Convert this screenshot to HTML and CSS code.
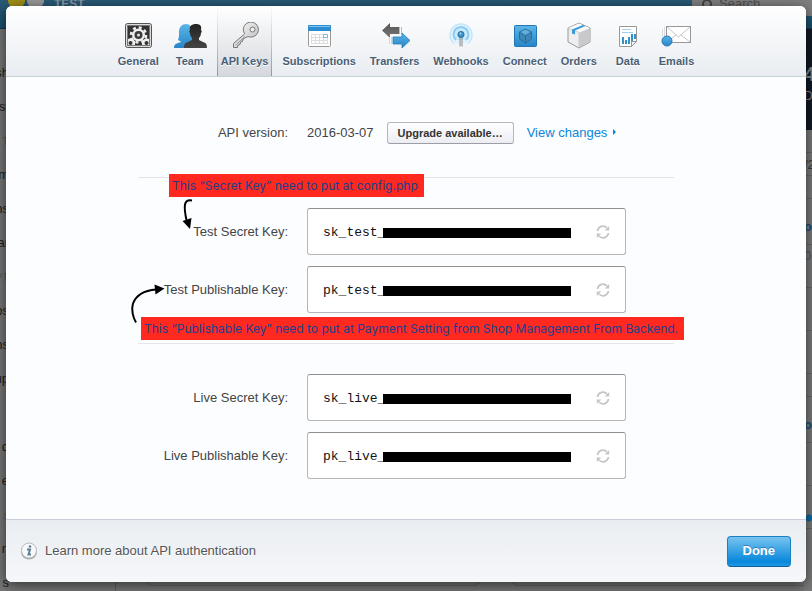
FILE: index.html
```html
<!DOCTYPE html>
<html lang="en">
<head>
<meta charset="utf-8">
<title>Account settings</title>
<link rel="stylesheet" href="styles.css">
</head>
<body>
<svg class="defs" width="0" height="0" aria-hidden="true">
  <defs>
    <linearGradient id="blue" x1="0" y1="0" x2="0" y2="1"><stop offset="0" stop-color="#5bb5e8"/><stop offset="1" stop-color="#2785c8"/></linearGradient>
    <linearGradient id="grey" x1="0" y1="0" x2="0" y2="1"><stop offset="0" stop-color="#555"/><stop offset="1" stop-color="#777"/></linearGradient>
    <linearGradient id="silver" x1="0" y1="0" x2="1" y2="1"><stop offset="0" stop-color="#fff"/><stop offset="1" stop-color="#b4b4b8"/></linearGradient>
    <linearGradient id="dark" x1="0" y1="0" x2="0" y2="1"><stop offset="0" stop-color="#222"/><stop offset="1" stop-color="#444"/></linearGradient>
    <symbol id="refresh" viewBox="0 0 14 14">
      <path d="M1.500 6A5.500 5.500 0 0 1 11 3M12.500 8A5.500 5.500 0 0 1 3 11" fill="none" stroke="#c6c6c8" stroke-width="1.800"/>
      <path d="M13.200 1v4.500H8.700zM.8 13V8.500h4.500z" fill="#c6c6c8"/>
    </symbol>
  </defs>
</svg>

<div class="page" aria-hidden="true">
  <div class="topbar"><span class="coin"></span><span class="coin silver"></span><b>TEST</b><div class="search"><svg width="12" height="12" viewBox="0 0 12 12"><circle cx="5" cy="4" r="4" fill="none" stroke="#444" stroke-width="2"/></svg>Search</div></div>
  <div class="columns">
    <ul class="side">
      <li class="tall">sh</li><li>st</li><li class="head">T</li><li>m</li><li>ns</li><li>ar</li><li class="head">PT</li><li>os</li><li>ns</li><li>up</li><li></li><li>d</li><li>e</li><li class="head">s</li><li>n</li><li>s</li>
    </ul>
    <div class="cards"><i></i><i></i></div>
    <div class="edge">
      <div class="figure"><b>4</b><span>D</span></div>
      <p class="short"></p><p class="short">/2</p><p class="short"></p><p class="link">of</p><p class="note">0</p><p></p><p></p><p class="short"></p><p class="link">of</p><p></p><p class="dot"></p>
    </div>
  </div>
</div>

<main class="modal">
  <nav class="tabs">
    <button type="button"><svg width="40" height="28" viewBox="0 0 40 28">
      <rect x="7.500" y="1.500" width="26" height="24" rx="2" fill="#ddd" stroke="#555"/><rect x="9.500" y="3.500" width="22" height="20" fill="#333" stroke="#777"/>
      <circle cx="20.500" cy="13" r="6.500" fill="#eee"/><circle cx="20.500" cy="13" r="7.500" fill="none" stroke="#eee" stroke-width="2.600" stroke-dasharray="3 2.890"/><circle cx="20.500" cy="13" r="4" fill="#3a3a3a"/><circle cx="20.500" cy="13" r="1.600" fill="#ddd"/>
      <path d="M10 23v-6l3-1 4 3v4zM31 23v-6l-3-1-4 3v4z" fill="#eee"/><circle cx="12.500" cy="21" r="2" fill="#333"/><circle cx="28.500" cy="21" r="2" fill="#333"/></svg>General</button>
    <button type="button"><svg width="40" height="28" viewBox="0 0 40 28">
      <path d="M4 26c0-3 1-4 4-5l3-1c0-1-2-1-3-2 1-2 1-4 1-8 0-5 3-8 7-8s6 3 6 8v16z" fill="url(#blue)"/>
      <path d="M14 26c0-4 1-5 4-6l4-2v-2c-1-1-2-3-2-5-1-1-1-2 0-3-1-4 2-6 6-6s6 2 5 6c1 1 1 2 0 3 0 2-1 4-2 5v2l4 2c3 1 4 2 4 6z" fill="url(#dark)"/></svg>Team</button>
    <button type="button" class="active" aria-current="page"><svg width="40" height="28" viewBox="0 0 40 28">
      <path d="M19.500 12 8.500 21.500v4h4l.500-2.500 2-.500.500-2.500 2-.500.500-2.500 5-2.500a7.500 7.500 0 1 0-3.500-3z" fill="url(#silver)" stroke="#777"/><circle cx="27.500" cy="7.500" r="2.500" fill="#eee" stroke="#777"/><path d="M10.500 23 20 14.500" stroke="#999"/></svg>API Keys</button>
    <button type="button"><svg width="40" height="28" viewBox="0 0 40 28">
      <rect x="9.500" y="3.500" width="22" height="21" rx="1" fill="#fff" stroke="#999"/><path d="M9 9V4q0-1 1-1h21q1 0 1 1v5z" fill="#2b8dce"/><path d="M10 4.500h21" stroke="#7cc4ee"/>
      <path d="M12.500 12.500h16v9h-16zM12.500 15.500h16M12.500 18.500h16M16.500 12.500v9M20.500 12.500v9M24.500 12.500v9" fill="none" stroke="#ddd"/><path d="M24.500 12.500h4v3h-4z" fill="#fff" stroke="#75bce6"/></svg>Subscriptions</button>
    <button type="button"><svg width="40" height="28" viewBox="0 0 40 28">
      <path d="M7 8.500 15 1v4h9v7h-9v4z" fill="url(#grey)"/><path d="M24.500 5v7M26.500 5v7" stroke="#bbb"/>
      <path d="M35 18.500 27 11v4h-9v7h9v4z" fill="url(#blue)" stroke="#277fb8" stroke-width=".800"/><path d="M14.500 15v7M16.500 15v7" stroke="#b9def4"/></svg>Transfers</button>
    <button type="button"><svg width="40" height="28" viewBox="0 0 40 28">
      <path d="M13 21.500a11 11 0 1 1 14 0" fill="#e3f3fd" stroke="#c3e5fa" stroke-width="1.500"/><path d="M15 18a7.500 7.500 0 1 1 10 0" fill="#cbe9fb" stroke="#8acbf3" stroke-width="2"/><circle cx="20" cy="12.500" r="4" fill="#b6def6"/>
      <path d="M19 15.500v9M21 15.500v9" stroke="#888"/><circle cx="20" cy="12.500" r="3" fill="#4193c6" stroke="#2671a0"/><circle cx="19.500" cy="11.500" r="1" fill="#a4daf5"/></svg>Webhooks</button>
    <button type="button"><svg width="40" height="28" viewBox="0 0 40 28">
      <rect x="9.500" y="3.500" width="22" height="21" rx="1" fill="url(#blue)" stroke="#2475b4"/><path d="m20.500 7 6 3v7l-6 4-6-4v-7z" fill="#3c87b8" stroke="#276b9a"/><path d="m14.500 10 6 3.500 6-3.500M20.500 13.500V21" fill="none" stroke="#276b9a"/><path d="m20.500 7.500 5 2.500-5 3-5-3z" fill="#64aedb"/></svg>Connect</button>
    <button type="button"><svg width="40" height="28" viewBox="0 0 40 28">
      <path d="m20 1 11 5v14l-11 6-11-6V6z" fill="#eee" stroke="#999"/><path d="m20 10.500 10.500-4V20L20 25.500z" fill="#c9c9cd"/><path d="m20 1.500 10.500 4.500L20 10.500 9.500 6z" fill="#fafafa"/><path d="M9.500 6.500 20 10.500V25" fill="none" stroke="#ccc"/><path d="m13 7.500 11-4.500 2.500 1L16 8.500v4l-3-1z" fill="#3b9bd8"/></svg>Orders</button>
    <button type="button"><svg width="40" height="28" viewBox="0 0 40 28">
      <path d="M11.500 4.500h17v15l-5 5h-12z" fill="#fff" stroke="#999"/><path d="M14 7.500h9M14 10.500h11" stroke="#a5d0ec"/><path d="M15 22v-7M18 22v-4M21 22v-7M24 20v-8M27 17v-5" stroke="#348fca" stroke-width="2"/><path d="M23.500 24.500v-5h5z" fill="#eee" stroke="#999"/></svg>Data</button>
    <button type="button"><svg width="40" height="28" viewBox="0 0 40 28">
      <rect x="9.500" y="4.500" width="24" height="16" fill="#fff" stroke="#999"/><path d="m10 5 11.500 10L33 5M10 20l9-7M33 20l-9-7" fill="none" stroke="#c4c4c4"/><path d="M7.500 5v12M5.500 7v8" stroke="#ddd"/><circle cx="10" cy="19" r="5" fill="url(#blue)" stroke="#2879b5"/></svg>Emails</button>
  </nav>

  <form class="content">
    <div class="row version">
      <span class="label">API version:</span>
      <div class="value"><span>2016-03-07</span><button type="button" class="upgrade">Upgrade available…</button><a href="#changes">View changes <span class="caret"></span></a></div>
    </div>

    <section class="keys">
      <div class="row"><label class="label" for="ts">Test Secret Key:</label><div class="field"><input id="ts" readonly value="sk_test_"><span class="mask"></span><button type="button" aria-label="Roll key"><svg width="14" height="14"><use href="#refresh"/></svg></button></div></div>
      <div class="row"><label class="label" for="tp">Test Publishable Key:</label><div class="field"><input id="tp" readonly value="pk_test_"><span class="mask"></span><button type="button" aria-label="Roll key"><svg width="14" height="14"><use href="#refresh"/></svg></button></div></div>
      <span class="callout secret">This “Secret Key” need to put at config.php</span>
      <span class="callout publishable">This “Publishable Key” need to put at Payment Setting from Shop Management From Backend.</span>
      <svg class="arrow down" width="16" height="34" viewBox="180 197 16 34"><path d="M192 200.500q-6-1-7 4t2 18" fill="none" stroke="#000" stroke-width="2"/><path d="m182.500 221 9-3-1.500 11z"/></svg>
      <svg class="arrow up" width="40" height="44" viewBox="128 282 40 44"><path d="M136 322.500c-3-5-5-13-3-19 3-8 11-13 23-14" fill="none" stroke="#000" stroke-width="2"/><path d="m154.500 284.500 10 4-9 6z"/></svg>
    </section>

    <section class="keys">
      <div class="row"><label class="label" for="ls">Live Secret Key:</label><div class="field"><input id="ls" readonly value="sk_live_"><span class="mask"></span><button type="button" aria-label="Roll key"><svg width="14" height="14"><use href="#refresh"/></svg></button></div></div>
      <div class="row"><label class="label" for="lp">Live Publishable Key:</label><div class="field"><input id="lp" readonly value="pk_live_"><span class="mask"></span><button type="button" aria-label="Roll key"><svg width="14" height="14"><use href="#refresh"/></svg></button></div></div>
    </section>
  </form>

  <footer class="footer">
    <a href="#docs"><svg width="18" height="18" viewBox="0 0 18 18"><circle cx="9" cy="9.500" r="8" fill="#aaa"/><circle cx="9" cy="8.500" r="7.500" fill="#f7f9fa" stroke="#b5bbc0"/><path d="M7 7.500h3l-1.500 5H11" fill="none" stroke="#5d7f92" stroke-width="2"/><circle cx="10" cy="4.500" r="1.300" fill="#5d7f92"/></svg>Learn more about API authentication</a>
    <button type="button" class="done">Done</button>
  </footer>
</main>
</body>
</html>
```

FILE: styles.css
```css
* { box-sizing: border-box; }

body {
  margin: 0;
  min-height: 100vh;
  position: relative;
  overflow: hidden;
  background: #777;
  font: 13px/16px "Liberation Sans", Arial, sans-serif;
  color: #444;
}

button, input { font: inherit; color: inherit; margin: 0; }
a { text-decoration: none; }
.defs { position: absolute; }

/* Dimmed dashboard behind the dialog */
.page {
  position: absolute;
  inset: 0;
  overflow: hidden;
  display: flex;
  flex-direction: column;
}

.topbar {
  display: flex;
  align-items: flex-start;
  flex: none;
  height: 29px;
  padding-left: 8px;
  gap: 2px;
  background: linear-gradient(#2b5a77, #18506f);
  border-bottom: 1px solid #123b53;
  color: #8d9ba5;
  font-size: 12px;
  line-height: 8px;
}
.topbar b { margin-left: 8px; }
.coin { width: 17px; height: 7px; background: #a09018; border-radius: 0 0 6px 6px; }
.coin.silver { background: #999; }
.search {
  display: flex;
  gap: 5px;
  width: 120px;
  height: 16px;
  margin-left: auto;
  padding-left: 10px;
  background: #808080;
  color: #505050;
  font-size: 13px;
  line-height: 8px;
}

.columns { display: flex; flex: 1; min-height: 0; }
.side {
  display: flex;
  flex-direction: column;
  align-items: flex-end;
  flex: none;
  width: 9px;
  margin: 0 106px 0 0;
  padding: 0;
  list-style: none;
  line-height: 34px;
  color: #222;
}
.side li { flex: none; height: 34px; }
.side .tall { height: 61px; line-height: 88px; }
.side .head { color: #555b60; font-size: 11px; }

.cards {
  display: flex;
  flex: 1;
  gap: 32px;
  padding: 0 0 5px 31px;
  border-left: 1px solid #606060;
}
.cards i { flex: 10; border: 1px solid #666; border-radius: 5px; }
.cards i:last-child { flex: 9; margin-right: -8px; }

.edge { flex: none; width: 8px; overflow: hidden; background: #7b7b7b; }
.figure { height: 101px; padding-top: 34px; background: #121a25; color: #888; overflow: hidden; }
.figure b { display: block; font-size: 20px; line-height: 22px; }
.figure span { font-size: 12px; line-height: 22px; }
.edge p { height: 43px; margin: 0; border-bottom: 1px solid #686868; color: #3a3a3a; }
.edge .short { height: 23px; line-height: 23px; }
.edge .link { height: 46px; line-height: 56px; color: #1a4d7a; font-weight: bold; }
.edge .note { color: #555; line-height: 22px; }
.edge .dot { background: radial-gradient(circle at 5px 32px, #0b6aa5 3px, transparent 4px); }

/* Dialog */
.modal {
  position: relative;
  margin: 6px 6px 9px;
  overflow: hidden;
  background: #fcfdff;
  border-radius: 6px;
  box-shadow: 0 3px 14px rgba(0, 0, 0, .6);
}

.tabs {
  display: flex;
  justify-content: center;
  gap: 6px;
  height: 71px;
  background: linear-gradient(#fff, #e9edf1);
  border-bottom: 1px solid #c5d0d7;
}
.tabs button {
  display: flex;
  flex-direction: column;
  align-items: center;
  gap: 3px;
  min-width: 42px;
  padding: 16px 3px 0;
  border: 0 solid transparent;
  border-width: 0 1px;
  background: none;
  color: #4a5f76;
  font-size: 11px;
  font-weight: bold;
  text-shadow: 0 1px 0 #fff;
  white-space: nowrap;
}
.tabs svg { margin: 0 -6px; }
.tabs .active {
  background: linear-gradient(#fff, #d5d9de);
  border-image: linear-gradient(#fff, #8f969d) 1;
  border-width: 0 1px;
}

.content { max-width: 536px; margin: 0 auto; padding: 45px 0 40px; }
.row { display: grid; grid-template-columns: 150px minmax(0, 1fr); column-gap: 19px; align-items: center; }
.label { text-align: right; }
.version { margin-bottom: 33px; }
.value { display: flex; align-items: center; gap: 13px; }
.value a { color: #0a85d8; }
.caret {
  display: inline-block;
  margin: 0 0 2px 2px;
  border: 3px solid transparent;
  border-left-color: #0a85d8;
  border-right: 0;
}
.upgrade {
  height: 22px;
  padding: 0 10px;
  border: 1px solid #b5b6bd;
  border-bottom-color: #9c9da6;
  border-radius: 3px;
  background: linear-gradient(#fff, #ecedf2);
  color: #333;
  font-size: 11px;
  font-weight: bold;
  white-space: nowrap;
}

.keys {
  position: relative;
  display: grid;
  gap: 11px;
  padding: 30px 0;
  border-top: 1px solid #e3e5e8;
}
.keys:last-child { padding-bottom: 0; }
.field {
  position: relative;
  display: flex;
  align-items: center;
  justify-content: space-between;
  max-width: 319px;
  height: 47px;
  padding: 0 15px;
  border: 1px solid #b5b6b8;
  border-top-color: #8f9092;
  border-radius: 3px;
  background: #fff;
}
.field input {
  flex: 1;
  min-width: 0;
  padding: 2px 0 0;
  border: 0;
  background: none;
  color: #111;
  font: 13px/16px "Liberation Mono", monospace;
}
.field button { display: flex; padding: 0; border: 0; background: none; }
.mask { position: absolute; left: 75px; top: 19px; width: 188px; height: 10px; background: #000; }

.callout {
  position: absolute;
  padding: 0 6px 0 3px;
  background: #ff291f;
  color: #223f8f;
  font: 12px/23px Inter, sans-serif;
  white-space: nowrap;
}
.secret { left: 31px; top: -4px; }
.publishable { left: 3px; bottom: 3px; }
.arrow { position: absolute; }
.down { left: 42px; top: 19px; }
.up { left: -10px; top: 104px; }

.footer {
  display: flex;
  align-items: center;
  justify-content: space-between;
  height: 63px;
  padding: 0 15px 0 14px;
  border-top: 1px solid #c9ced8;
  background: linear-gradient(#e9edf1, #f6f7fa);
}
.footer a { display: flex; align-items: center; gap: 7px; color: #555; text-shadow: 0 1px 0 #fff; }
.done {
  height: 31px;
  padding: 0 15px;
  border: 1px solid #1a80c2;
  border-bottom-color: #0b5f9c;
  border-radius: 4px;
  background: linear-gradient(#78c3ef, #0788dc 85%, #2397e2);
  color: #fff;
  font-weight: bold;
  text-shadow: 0 -1px 0 rgba(0, 60, 110, .4);
}
```
